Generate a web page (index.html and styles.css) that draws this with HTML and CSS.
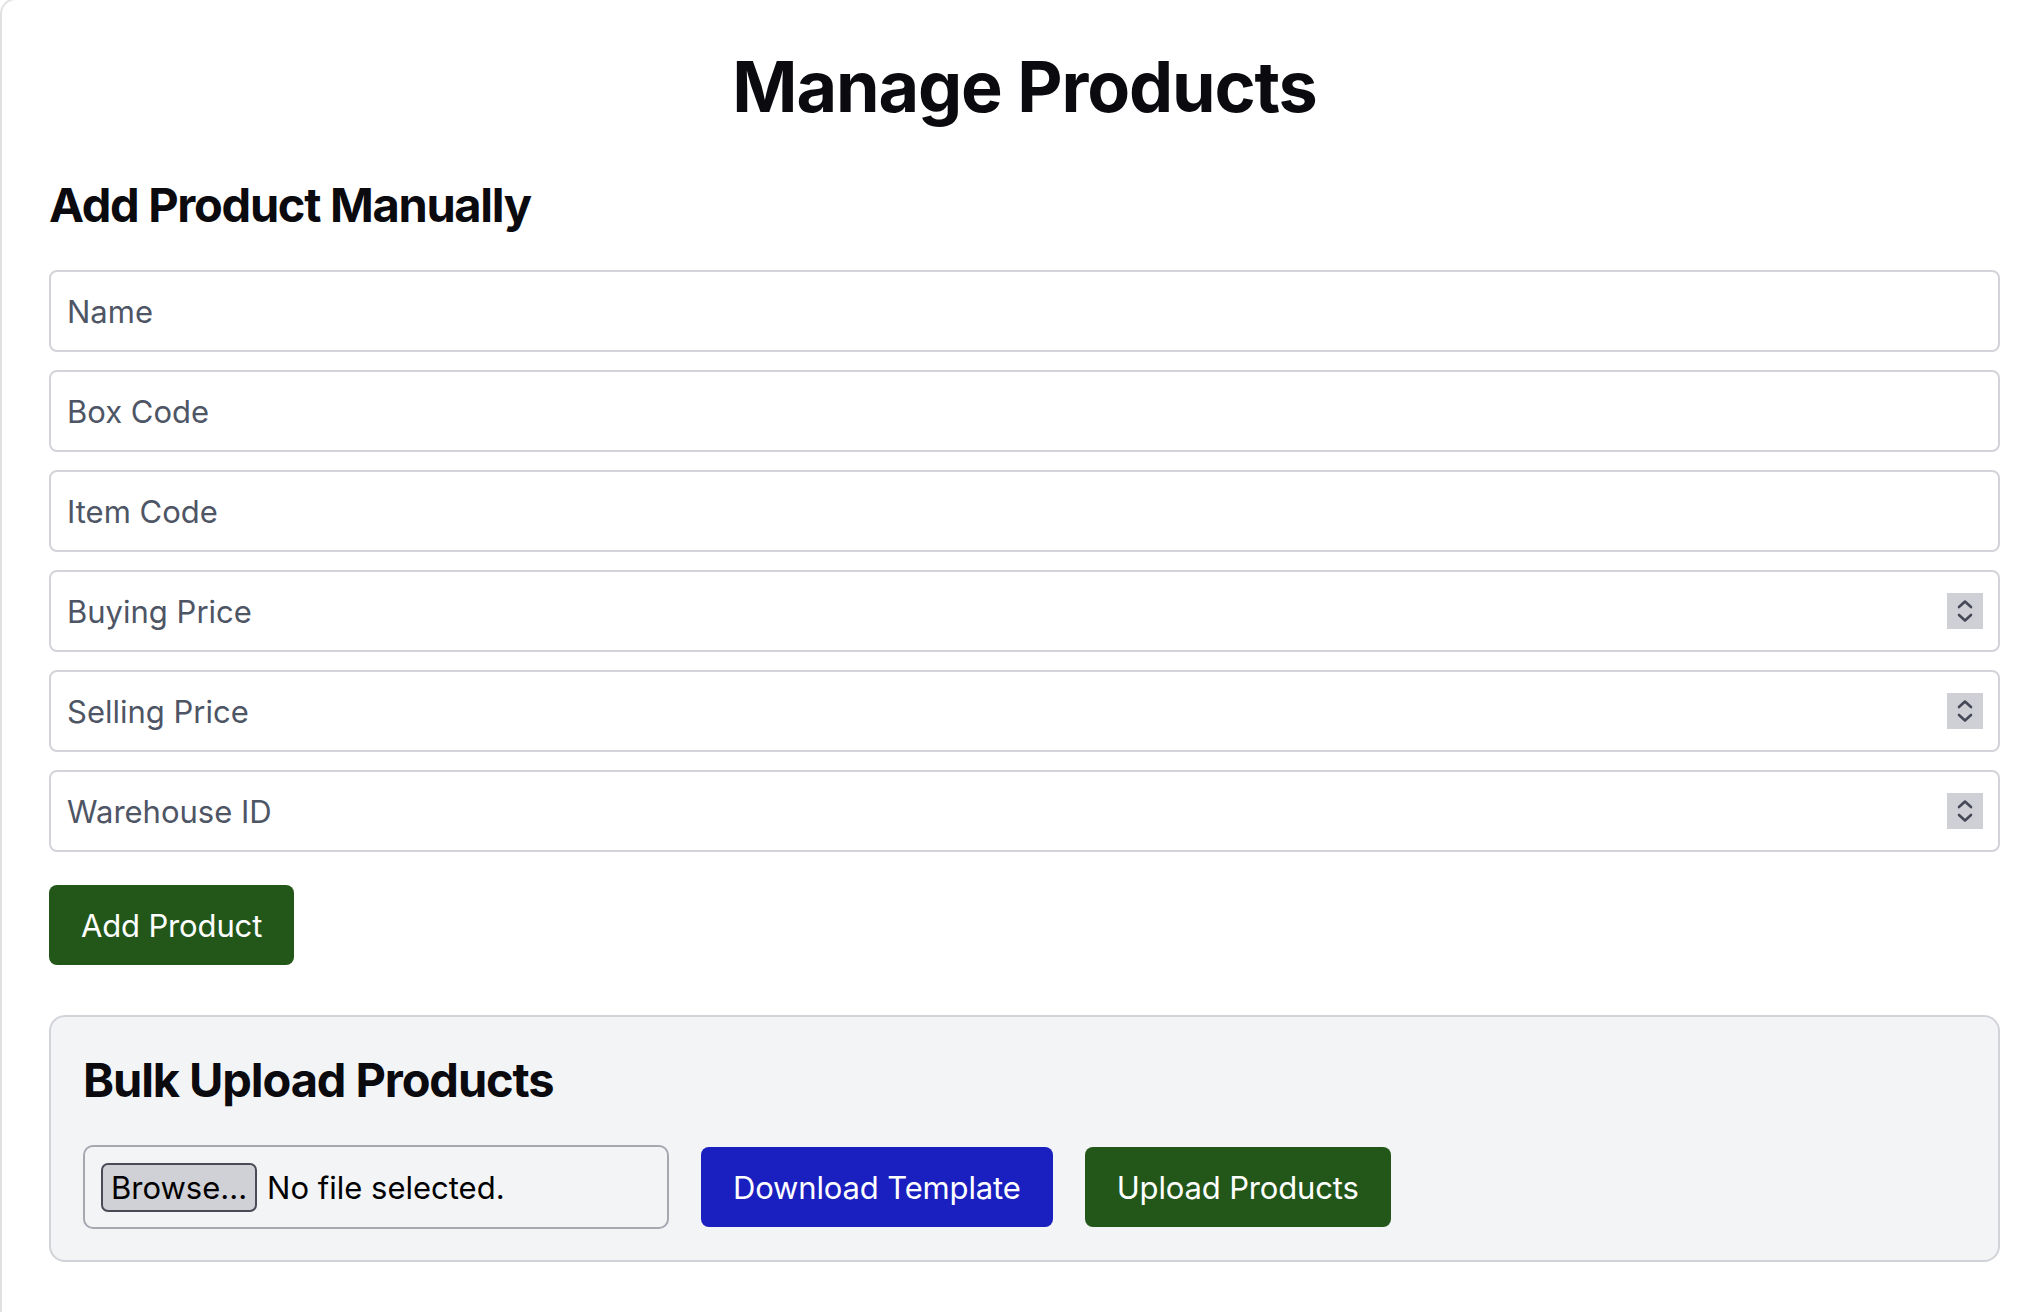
FILE: index.html
```html
<!DOCTYPE html>
<html lang="en">
<head>
<meta charset="utf-8">
<title>Manage Products</title>
<link rel="stylesheet" href="styles.css">
</head>
<body>
<div class="card">
  <h1 class="title">Manage Products</h1>

  <section class="manual">
    <h2 class="section-title">Add Product Manually</h2>
    <form class="product-form">
      <div class="field"><input class="field-input" type="text" placeholder="Name"></div>
      <div class="field"><input class="field-input" type="text" placeholder="Box Code"></div>
      <div class="field"><input class="field-input" type="text" placeholder="Item Code"></div>
      <div class="field">
        <input class="field-input" type="text" inputmode="decimal" placeholder="Buying Price">
        <span class="stepper"><svg viewBox="0 0 36 36" width="36" height="36"><path d="M12 14 L18 8.5 L24 14" /><path d="M12 22 L18 27.5 L24 22" /></svg></span>
      </div>
      <div class="field">
        <input class="field-input" type="text" inputmode="decimal" placeholder="Selling Price">
        <span class="stepper"><svg viewBox="0 0 36 36" width="36" height="36"><path d="M12 14 L18 8.5 L24 14" /><path d="M12 22 L18 27.5 L24 22" /></svg></span>
      </div>
      <div class="field">
        <input class="field-input" type="text" inputmode="numeric" placeholder="Warehouse ID">
        <span class="stepper"><svg viewBox="0 0 36 36" width="36" height="36"><path d="M12 14 L18 8.5 L24 14" /><path d="M12 22 L18 27.5 L24 22" /></svg></span>
      </div>
      <div class="form-actions">
        <button class="btn btn-green" type="button">Add Product</button>
      </div>
    </form>
  </section>

  <section class="bulk">
    <h2 class="section-title bulk-title">Bulk Upload Products</h2>
    <div class="bulk-row">
      <label class="file-box">
        <input class="file-hidden" type="file">
        <span class="browse">Browse...</span>
        <span class="file-name">No file selected.</span>
      </label>
      <button class="btn btn-blue" type="button">Download Template</button>
      <button class="btn btn-green" type="button">Upload Products</button>
    </div>
  </section>
</div>
</body>
</html>
```
FILE: styles.css
```css
* { box-sizing: border-box; }

html, body {
  margin: 0;
  background: #ffffff;
}

body {
  font-family: Inter, "Noto Sans", "Liberation Sans", sans-serif;
  color: #0a0a0f;
  overflow: hidden;
}

.card {
  min-height: 1400px;
  margin-top: -2px;
  border-left: 2px solid #e1e1e4;
  border-top: 2px solid #e1e1e4;
  border-top-left-radius: 16px;
  padding: 48px 40px 0 47px;
}

.title {
  margin: 0 0 48px;
  font-size: 70px;
  line-height: 78px;
  font-weight: 700;
  letter-spacing: -1.1px;
  text-align: center;
}

.section-title {
  margin: 0 0 34px;
  font-size: 47px;
  line-height: 62px;
  font-weight: 700;
  letter-spacing: -1.3px;
}

.product-form {
  display: flex;
  flex-direction: column;
  gap: 18px;
}

.field {
  display: flex;
  align-items: center;
  height: 82px;
  border: 2px solid #d2d4d9;
  border-radius: 8px;
  padding: 0 15px 0 16px;
  background: #ffffff;
}

.field-input {
  flex: 1;
  min-width: 0;
  border: 0;
  outline: none;
  background: transparent;
  padding: 0;
  font-family: inherit;
  font-size: 31px;
  color: #111827;
}

.field-input::placeholder {
  color: #4e5565;
  opacity: 1;
}

.stepper {
  display: flex;
  width: 36px;
  height: 36px;
  background: #cfd0d6;
}

.stepper svg path {
  fill: none;
  stroke: #454857;
  stroke-width: 2.6;
  stroke-linecap: round;
  stroke-linejoin: round;
}

.form-actions {
  display: flex;
  padding-top: 15px;
}

.btn {
  height: 80px;
  padding: 0 32px;
  border: 0;
  border-radius: 8px;
  font-family: inherit;
  font-size: 31px;
  letter-spacing: -0.15px;
  color: #ffffff;
  cursor: pointer;
}

.btn-green { background: #235719; }
.btn-blue { background: #1a1fbf; }

.bulk {
  margin-top: 50px;
  background: #f3f4f6;
  border: 2px solid #d1d3d9;
  border-radius: 16px;
  padding: 32px 32px 31px;
}

.bulk-title {
  margin-bottom: 34px;
  letter-spacing: -1.1px;
}

.bulk-row {
  display: flex;
  align-items: center;
  gap: 32px;
}

.file-box {
  display: flex;
  align-items: center;
  width: 586px;
  height: 84px;
  border: 2px solid #a5a7b1;
  border-radius: 10px;
  padding: 0 16px;
}

.file-hidden {
  display: none;
}

.browse {
  display: flex;
  align-items: center;
  height: 49px;
  padding: 0 8px;
  background: #d0d1d6;
  border: 2px solid #4a4b57;
  border-radius: 7px;
  font-size: 31px;
  color: #000000;
}

.file-name {
  margin-left: 10px;
  font-size: 31px;
  color: #000000;
}
```
